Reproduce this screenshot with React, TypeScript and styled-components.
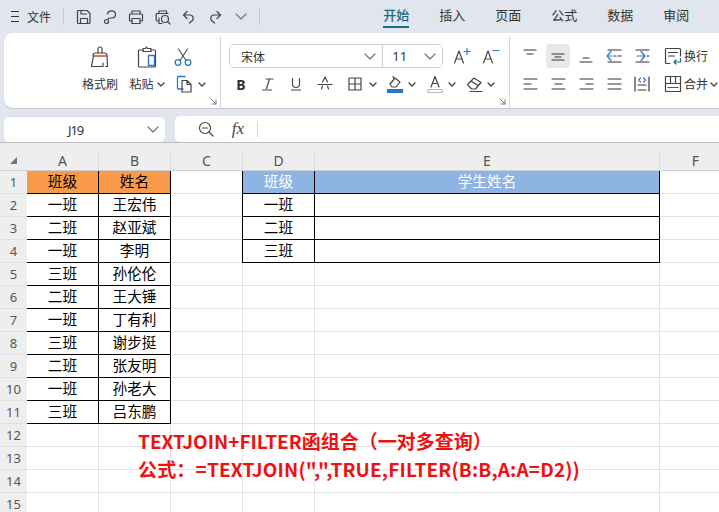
import React from "react";
import styled, { createGlobalStyle } from "styled-components";

const GlobalStyle = createGlobalStyle`
  html, body {
    margin: 0;
    padding: 0;
    background: #fff;
    font-family: "Noto Sans CJK SC", "Noto Sans", sans-serif;
  }
`;

const Page = styled.div`
  position: relative;
  width: 719px;
  height: 512px;
  overflow: hidden;
  background: #e1e5ed;
  color: #333;
`;

const Ico = styled.svg<{ $w?: number; $h?: number }>`
  display: block;
  flex: none;
  width: ${(p) => p.$w || 16}px;
  height: ${(p) => p.$h || p.$w || 16}px;
  fill: none;
  stroke: #444;
  stroke-width: 1.2;
  stroke-linecap: round;
  stroke-linejoin: round;
`;

const Chevron = ({ big }: { big?: boolean }) =>
  big ? (
    <Ico $w={12} $h={7} viewBox="0 0 12 7">
      <path d="M1 1l5 5 5-5" stroke="#777" />
    </Ico>
  ) : (
    <Ico $w={8} $h={5} viewBox="0 0 8 5">
      <path d="M1 1l3 3 3-3" strokeWidth="1.4" />
    </Ico>
  );

const TitleBar = styled.div`
  display: flex;
  align-items: center;
  height: 33px;
  padding-left: 11px;
  box-sizing: border-box;
`;

const Burger = styled.div`
  width: 8px;
  height: 9px;
  border-top: 1px solid #333;
  border-bottom: 1px solid #333;
  margin-right: 8px;
  &::after {
    content: "";
    display: block;
    margin-top: 4px;
    border-top: 1px solid #333;
  }
`;

const FileLabel = styled.span`
  font-size: 12px;
  width: 36px;
`;

const BarDivider = styled.div`
  width: 1px;
  height: 17px;
  background: #c6cad1;
`;

const QuickRow = styled.div`
  display: flex;
  align-items: center;
  margin: 0 5px 0 7px;
`;

const QuickSlot = styled.div`
  width: 26.2px;
  display: flex;
  align-items: center;
  justify-content: center;
`;

const Tabs = styled.div`
  display: flex;
  gap: 30px;
  margin-left: 123px;
`;

const Tab = styled.div<{ $on?: boolean }>`
  width: 26px;
  height: 33px;
  line-height: 30px;
  font-size: 13px;
  white-space: nowrap;
  box-sizing: border-box;
  color: ${(p) => (p.$on ? "#1b6a86" : "#333")};
  font-weight: ${(p) => (p.$on ? 500 : 400)};
  &::after {
    content: "";
    display: ${(p) => (p.$on ? "block" : "none")};
    height: 2px;
    background: #1b6a86;
    margin-top: -4px;
  }
`;

const Ribbon = styled.div`
  display: flex;
  margin-left: 4px;
  height: 75px;
  background: #fff;
  border-radius: 9px 0 0 9px;
  box-shadow: 0 1px 1px #c4c8cf;
  overflow: hidden;
`;

const Group = styled.div<{ $w: number; $last?: boolean }>`
  display: flex;
  flex-direction: column;
  flex: none;
  box-sizing: border-box;
  width: ${(p) => p.$w}px;
  height: 71px;
  margin-top: 4px;
  padding-top: 7px;
  border-right: ${(p) => (p.$last ? "none" : "1px solid #d5d7db")};
`;

const Launcher = styled.div`
  margin-top: auto;
  margin-bottom: 3px;
  margin-right: 3px;
  align-self: flex-end;
`;

const ClipGrid = styled.div`
  display: grid;
  grid-template-columns: 44px 50px 38px;
  grid-template-rows: 26px 22px;
  row-gap: 3px;
  padding-left: 74px;
  align-items: center;
  justify-items: center;
`;

const ScissorSlot = styled.div`
  margin-right: 16px;
`;

const ToolLabel = styled.span`
  font-size: 12px;
  line-height: 16px;
  color: #333;
  white-space: nowrap;
`;

const Inline = styled.div<{ $gap?: number; $inset?: number }>`
  display: flex;
  align-items: center;
  gap: ${(p) => p.$gap || 0}px;
  margin-left: ${(p) => p.$inset || 0}px;
`;

const FontRow = styled.div`
  display: flex;
  align-items: center;
  height: 24px;
  padding-left: 8px;
`;

const SelectPair = styled.div`
  display: flex;
  width: 214px;
  height: 24px;
  margin-right: 4px;
  box-sizing: border-box;
  border: 1px solid #cfd1d5;
  border-radius: 5px;
`;

const SelectPart = styled.div<{ $w: number; $pad: number }>`
  display: flex;
  align-items: center;
  justify-content: space-between;
  box-sizing: border-box;
  width: ${(p) => p.$w}px;
  padding: 0 6px 0 ${(p) => p.$pad}px;
  font-size: 12px;
  color: #333;
  & + & {
    border-left: 1px solid #cfd1d5;
  }
`;

const SizeValue = styled.span`
  font-family: "Noto Sans", sans-serif;
  font-size: 13px;
`;

const GrowButton = styled.div`
  width: 29px;
  display: flex;
  justify-content: center;
`;

const ToolRow = styled.div`
  display: flex;
  align-items: center;
  height: 22px;
  margin-top: 5px;
  padding-left: 8px;
`;

const ToolSlot = styled.div<{ $w: number }>`
  width: ${(p) => p.$w}px;
  flex: none;
  display: flex;
  justify-content: center;
  align-items: center;
`;

const Split = styled.div<{ $w: number; $gap: number; $pad?: number }>`
  width: ${(p) => p.$w}px;
  flex: none;
  box-sizing: border-box;
  padding-left: ${(p) => p.$pad || 0}px;
  display: flex;
  align-items: center;
  gap: ${(p) => p.$gap}px;
`;

const BoldB = styled.span`
  font-family: "Noto Sans", sans-serif;
  font-weight: 700;
  font-size: 14px;
  color: #333;
`;

const AlignRow = styled.div`
  display: flex;
  align-items: center;
  height: 24px;
  padding-left: 6px;
`;

const AlignRowLow = styled(AlignRow)`
  height: 22px;
  margin-top: 5px;
`;

const AlignSlot = styled.div<{ $on?: boolean }>`
  width: 24px;
  height: 24px;
  margin: 0 2px;
  flex: none;
  display: flex;
  align-items: center;
  justify-content: center;
  border-radius: 4px;
  background: ${(p) => (p.$on ? "#e8e8e8" : "transparent")};
`;

const FormulaBar = styled.div`
  display: flex;
  gap: 10px;
  height: 35px;
  padding: 8px 0 0 4px;
  box-sizing: border-box;
  border-bottom: 1px solid #bcbcbc;
`;

const NameBox = styled.div`
  display: flex;
  align-items: center;
  width: 161px;
  height: 26px;
  padding-right: 6px;
  box-sizing: border-box;
  background: #fff;
  border-radius: 5px;
  border-top: 1px solid #d8dbe1;
`;

const CellRef = styled.span`
  flex: 1;
  text-align: center;
  font-family: "Noto Sans", sans-serif;
  font-size: 13px;
  letter-spacing: -1.2px;
  color: #333;
`;

const FormulaBox = styled.div`
  display: flex;
  align-items: center;
  flex: 1;
  height: 26px;
  background: #fff;
  border-radius: 5px 0 0 5px;
  padding-left: 23px;
`;

const FxMark = styled.i`
  font-family: "Liberation Serif", serif;
  font-size: 17px;
  color: #444;
  width: 24px;
  margin-left: 12px;
  text-align: center;
`;

const FxDivider = styled.div`
  width: 1px;
  height: 16px;
  background: #d2d4d8;
  margin-left: 7px;
`;

const Sheet = styled.div`
  display: grid;
  grid-template-columns: 27px 72px 72px 72px 72px 345px 72px;
  grid-template-rows: 21px repeat(15, 23px);
  padding-top: 7px;
  background: #eee;
`;

const Corner = styled.div`
  background: #eee;
  display: flex;
  align-items: flex-end;
  justify-content: flex-end;
  padding: 0 10px 6px 0;
  border-bottom: 1px solid #d0d0d0;
`;

const ColHead = styled.div`
  display: flex;
  align-items: center;
  justify-content: center;
  box-sizing: border-box;
  background: #eee;
  color: #555;
  font-family: "Noto Sans", sans-serif;
  font-size: 14px;
  border-right: 1px solid #dcdcdc;
  border-bottom: 1px solid #d0d0d0;
`;

const RowHead = styled.div`
  display: flex;
  align-items: center;
  justify-content: center;
  box-sizing: border-box;
  background: #eee;
  color: #555;
  font-family: "Noto Sans", sans-serif;
  font-size: 13px;
  border-bottom: 1px solid #e0e0e0;
`;

const Cell = styled.div<{ $ruled?: boolean; $edge?: boolean; $tone?: "orange" | "blue" }>`
  display: flex;
  align-items: center;
  justify-content: center;
  box-sizing: border-box;
  padding-bottom: 1px;
  font-size: 14.67px;
  line-height: 1;
  color: ${(p) => (p.$tone === "blue" ? "#fff" : "#000")};
  background: ${(p) =>
    p.$tone === "orange" ? "#f9994a" : p.$tone === "blue" ? "#8db4e2" : "#fff"};
  border-right: 1px solid ${(p) => (p.$ruled ? "#000" : "#e3e3e3")};
  border-bottom: 1px solid ${(p) => (p.$ruled ? "#000" : "#e3e3e3")};
  box-shadow: ${(p) => (p.$edge ? "-1px 0 0 #000" : "none")};
`;

const Callout = styled.div`
  position: absolute;
  left: 138px;
  top: 427px;
  color: #ee1111;
  font-weight: 700;
  font-size: 19px;
  line-height: 28px;
  white-space: nowrap;
`;

const CalloutLine = styled.div<{ $track?: number }>`
  letter-spacing: ${(p) => p.$track || 0}px;
`;

const COLS = ["A", "B", "C", "D", "E", "F"];
const LEFT: [string, string][] = [
  ["班级", "姓名"],
  ["一班", "王宏伟"],
  ["二班", "赵亚斌"],
  ["一班", "李明"],
  ["三班", "孙伦伦"],
  ["二班", "王大锤"],
  ["一班", "丁有利"],
  ["三班", "谢步挺"],
  ["二班", "张友明"],
  ["一班", "孙老大"],
  ["三班", "吕东鹏"],
];
const RIGHT: [string, string][] = [
  ["班级", "学生姓名"],
  ["一班", ""],
  ["二班", ""],
  ["三班", ""],
];

const LauncherIcon = () => (
  <Launcher>
    <Ico $w={7} viewBox="0 0 7 7">
      <path d="M1 1l5 5M6 2v4H2" stroke="#777" strokeWidth="1" />
    </Ico>
  </Launcher>
);

const Lines = ({ rows }: { rows: [number, number, number][] }) => (
  <Ico $w={20} $h={16} viewBox="0 0 20 16">
    {rows.map(([x1, x2, y], i) => (
      <path key={i} d={`M${x1} ${y}H${x2}`} stroke="#333" />
    ))}
  </Ico>
);

const QuickIcons = [
  <Ico key="save" viewBox="0 0 16 16">
    <path d="M2.5 1.5h8.5l3 3v9a1 1 0 0 1-1 1H2.5a1 1 0 0 1-1-1v-11a1 1 0 0 1 1-1z" />
    <path d="M5 1.5v3.5h5.5M4.5 14.5V9.5h7v5" />
  </Ico>,
  <Ico key="share" viewBox="0 0 16 16">
    <path d="M5.5 5a4 3.6 0 1 1 4.5 4H7.5c-1 0-1.5.7-1.5 1.5" />
    <circle cx="4.5" cy="12.5" r="2" />
  </Ico>,
  <Ico key="print" viewBox="0 0 16 16">
    <path d="M4 5V2h8v3M4 12H2.5a1 1 0 0 1-1-1V6a1 1 0 0 1 1-1h11a1 1 0 0 1 1 1v5a1 1 0 0 1-1 1H12" />
    <path d="M4 9.500h8v5H4z" />
  </Ico>,
  <Ico key="preview" viewBox="0 0 16 16">
    <path d="M4 4.500V2h7.500v2.500M3.500 12H2a1 1 0 0 1-.8-1V5.500a1 1 0 0 1 1-1H13" />
    <circle cx="10" cy="10" r="3.500" />
    <path d="M12.500 12.500l2.500 2.500M4 9v5.500h3" />
  </Ico>,
  <Ico key="undo" viewBox="0 0 16 16">
    <path d="M6 2.500L2.500 6 6 9.500M2.500 6h6.500a3.300 3.300 0 0 1 1.500 6.200L8.500 14" />
  </Ico>,
  <Ico key="redo" viewBox="0 0 16 16">
    <path d="M10 2.500L13.500 6 10 9.500M13.500 6H7a3.300 3.300 0 0 0-1.500 6.200L7.500 14" />
  </Ico>,
  <Chevron key="more" big />,
];

export default function App() {
  return (
    <Page>
      <GlobalStyle />
      <TitleBar>
        <Burger />
        <FileLabel>文件</FileLabel>
        <BarDivider />
        <QuickRow>
          {QuickIcons.map((icon, i) => (
            <QuickSlot key={i}>{icon}</QuickSlot>
          ))}
        </QuickRow>
        <BarDivider />
        <Tabs>
          <Tab $on>开始</Tab>
          <Tab>插入</Tab>
          <Tab>页面</Tab>
          <Tab>公式</Tab>
          <Tab>数据</Tab>
          <Tab>审阅</Tab>
        </Tabs>
      </TitleBar>

      <Ribbon>
        <Group $w={217}>
          <ClipGrid>
            <Ico $w={20} $h={22} viewBox="0 0 20 22">
              <path d="M8 7V3a2 2 0 0 1 4 0v4" />
              <path d="M3 10c0-2 1-3 2.500-3h9c1.500 0 2.500 1 2.500 3" />
              <path d="M3.500 10L1.500 20.500H13v-3.500M17 10l.5 10.500H15.500" />
              <path d="M4 10h12" stroke="#c8481c" strokeWidth="1.400" />
            </Ico>
            <Ico $w={20} $h={22} viewBox="0 0 20 22">
              <path d="M6 4H2.500a1 1 0 0 0-1 1v15a1 1 0 0 0 1 1h15a1 1 0 0 0 1-1V5a1 1 0 0 0-1-1H14" />
              <path d="M6 5.500V2.500h2.500l1-1.500 1 1.500H14v3z" />
              <path d="M11.500 9.500h6v10h-6z" stroke="#2b74c6" strokeWidth="1.400" />
            </Ico>
            <ScissorSlot>
              <Ico $w={18} viewBox="0 0 18 18">
                <path d="M4.500 1l7.500 11.500M13.500 1L6 12.500" stroke="#555" />
                <circle cx="4" cy="14.500" r="2.800" stroke="#2b74c6" strokeWidth="1.300" />
                <circle cx="14" cy="14.500" r="2.800" stroke="#2b74c6" strokeWidth="1.300" />
              </Ico>
            </ScissorSlot>
            <ToolLabel>格式刷</ToolLabel>
            <Inline $gap={3}>
              <ToolLabel>粘贴</ToolLabel>
              <Chevron />
            </Inline>
            <Inline $gap={4}>
              <Ico $w={18} viewBox="0 0 18 18">
                <path d="M7 14H2.500a1 1 0 0 1-1-1V2.500a1 1 0 0 1 1-1h6.500" stroke="#2b74c6" strokeWidth="1.300" />
                <path d="M6 5.500h5l4 4v7.500H6zM11 5.500v4h4" />
              </Ico>
              <Chevron />
            </Inline>
          </ClipGrid>
          <LauncherIcon />
        </Group>

        <Group $w={289}>
          <FontRow>
            <SelectPair>
              <SelectPart $w={153} $pad={11}>
                宋体
                <Chevron big />
              </SelectPart>
              <SelectPart $w={60} $pad={9}>
                <SizeValue>11</SizeValue>
                <Chevron big />
              </SelectPart>
            </SelectPair>
            <GrowButton>
              <Ico $w={18} viewBox="0 0 18 18">
                <path d="M1.500 16L6 4l4.500 12M3 12h6" />
                <path d="M11 4.500h6M14 1.500v6" stroke="#2b74c6" />
              </Ico>
            </GrowButton>
            <GrowButton>
              <Ico $w={18} viewBox="0 0 18 18">
                <path d="M1.500 16L6 4l4.500 12M3 12h6" />
                <path d="M11 3.500h6" stroke="#2b74c6" />
              </Ico>
            </GrowButton>
          </FontRow>
          <ToolRow>
            <ToolSlot $w={24}>
              <BoldB>B</BoldB>
            </ToolSlot>
            <ToolSlot $w={29}>
              <Ico $w={14} viewBox="0 0 14 14">
                <path d="M5 2h7M8.500 2l-3 9.500M1.500 13h9" />
              </Ico>
            </ToolSlot>
            <ToolSlot $w={28}>
              <Ico $w={14} viewBox="0 0 14 14">
                <path d="M3.500 1.500V7a3.500 3.500 0 0 0 7 0V1.500M2.500 13h9" />
              </Ico>
            </ToolSlot>
            <ToolSlot $w={30}>
              <Ico $w={16} viewBox="0 0 16 16">
                <path d="M5.500 6L8 1l2.500 5M1 8.500h14M4.500 13l1-3M11.500 13l-1-3" />
              </Ico>
            </ToolSlot>
            <Split $w={46} $gap={7} $pad={8}>
              <Ico $w={14} viewBox="0 0 14 14">
                <path d="M1 1h12v12H1zM7 1v12M1 7h12" />
              </Ico>
              <Chevron />
            </Split>
            <Split $w={40} $gap={4}>
              <Ico $w={18} viewBox="0 0 18 18">
                <path d="M4 9l5-6 5 4-4 5H6zM8 3.500L7 1.500" />
                <path d="M1.500 14.500h15v3h-15z" fill="#2b74c6" stroke="#2b74c6" />
              </Ico>
              <Chevron />
            </Split>
            <Split $w={40} $gap={4}>
              <Ico $w={18} viewBox="0 0 18 18">
                <path d="M5 12l4-10.500L13 12M6.300 8.500h5.400" />
                <path d="M2 14.500h14v3H2z" stroke="#b8b8b8" />
              </Ico>
              <Chevron />
            </Split>
            <Split $w={40} $gap={3}>
              <Ico $w={18} viewBox="0 0 18 18">
                <path d="M1.500 9.500L8 3l7 4.500-5.500 6.500H5.500zM5 6l7 4.500" />
                <path d="M4 16.500h12" />
              </Ico>
              <Chevron />
            </Split>
          </ToolRow>
          <LauncherIcon />
        </Group>

        <Group $w={220} $last>
          <AlignRow>
            <AlignSlot>
              <Lines rows={[[4, 16, 2], [7, 13, 6]]} />
            </AlignSlot>
            <AlignSlot $on>
              <Lines rows={[[4, 16, 6], [7, 13, 9], [4, 16, 12]]} />
            </AlignSlot>
            <AlignSlot>
              <Lines rows={[[7, 13, 10], [4, 16, 14]]} />
            </AlignSlot>
            <AlignSlot>
              <Ico $w={20} $h={16} viewBox="0 0 20 16">
                <path d="M7 3.500L3 8l4 4.500M3 8h5" stroke="#2b74c6" />
                <path d="M4 2h13M10 8h2M14 8h3M4 14h13" stroke="#333" />
              </Ico>
            </AlignSlot>
            <AlignSlot>
              <Ico $w={20} $h={16} viewBox="0 0 20 16">
                <path d="M9 3.500L13 8l-4 4.500M13 8H5" stroke="#2b74c6" />
                <path d="M4 2h13M15 8h2M4 14h13" stroke="#333" />
              </Ico>
            </AlignSlot>
            <Inline $gap={2} $inset={8}>
              <Ico $w={18} viewBox="0 0 18 18">
                <path d="M6 16.500H2.500a1 1 0 0 1-1-1v-13a1 1 0 0 1 1-1h13a1 1 0 0 1 1 1V9" />
                <path d="M4.500 5.500h9M4.500 9h6" />
                <path d="M16.500 11.500v3.500H10M12 13l-2 2 2 2" stroke="#1b6a86" />
              </Ico>
              <ToolLabel>换行</ToolLabel>
            </Inline>
          </AlignRow>
          <AlignRowLow>
            <AlignSlot>
              <Lines rows={[[4, 17, 3], [4, 11, 8], [4, 17, 13]]} />
            </AlignSlot>
            <AlignSlot>
              <Lines rows={[[4, 17, 3], [7, 14, 8], [4, 17, 13]]} />
            </AlignSlot>
            <AlignSlot>
              <Lines rows={[[4, 17, 3], [10, 17, 8], [4, 17, 13]]} />
            </AlignSlot>
            <AlignSlot>
              <Lines rows={[[4, 17, 3], [4, 17, 8], [4, 17, 13]]} />
            </AlignSlot>
            <AlignSlot>
              <Ico $w={20} $h={16} viewBox="0 0 20 16">
                <path d="M3 1v14M17 1v14M6 9h8M6 14h8" stroke="#333" />
                <path d="M8.500 2L6.500 4l2 2M11.500 2l2 2-2 2" stroke="#2b74c6" />
              </Ico>
            </AlignSlot>
            <Inline $gap={2} $inset={8}>
              <Ico $w={18} viewBox="0 0 18 18">
                <path d="M1.500 1.500h15v15h-15zM6.500 1.500v7M11.500 1.500v7M1.500 8.500h15" />
                <path d="M4 12.500h10" stroke="#1b6a86" />
              </Ico>
              <ToolLabel>合并</ToolLabel>
              <Chevron />
            </Inline>
          </AlignRowLow>
        </Group>
      </Ribbon>

      <FormulaBar>
        <NameBox>
          <CellRef>J19</CellRef>
          <Chevron big />
        </NameBox>
        <FormulaBox>
          <Ico $w={16} viewBox="0 0 16 16">
            <circle cx="7" cy="7" r="5.500" />
            <path d="M11 11l4 4M4.500 7h5" />
          </Ico>
          <FxMark>fx</FxMark>
          <FxDivider />
        </FormulaBox>
      </FormulaBar>

      <Sheet>
        <Corner>
          <Ico $w={7} viewBox="0 0 7 7">
            <path d="M7 0v7H0z" fill="#777" stroke="none" />
          </Ico>
        </Corner>
        {COLS.map((c) => (
          <ColHead key={c}>{c}</ColHead>
        ))}
        {Array.from({ length: 15 }, (_, r) => {
          const left = LEFT[r];
          const right = RIGHT[r];
          return (
            <React.Fragment key={r}>
              <RowHead>{r + 1}</RowHead>
              <Cell $ruled={!!left} $tone={r === 0 ? "orange" : undefined}>
                {left?.[0]}
              </Cell>
              <Cell $ruled={!!left} $tone={r === 0 ? "orange" : undefined}>
                {left?.[1]}
              </Cell>
              <Cell />
              <Cell $ruled={!!right} $edge={!!right} $tone={r === 0 ? "blue" : undefined}>
                {right?.[0]}
              </Cell>
              <Cell $ruled={!!right} $tone={r === 0 ? "blue" : undefined}>
                {right?.[1]}
              </Cell>
              <Cell />
            </React.Fragment>
          );
        })}
      </Sheet>

      <Callout>
        <CalloutLine>TEXTJOIN+FILTER函组合（一对多查询）</CalloutLine>
        <CalloutLine $track={0.17}>公式：=TEXTJOIN(",",TRUE,FILTER(B:B,A:A=D2))</CalloutLine>
      </Callout>
    </Page>
  );
}
